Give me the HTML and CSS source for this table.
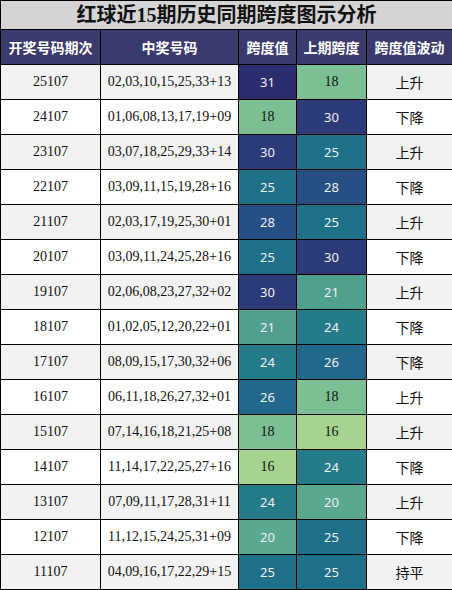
FILE: index.html
```html
<!DOCTYPE html>
<html lang="zh">
<head>
<meta charset="utf-8">
<title>红球近15期历史同期跨度图示分析</title>
<link rel="stylesheet" href="styles.css">
</head>
<body>
<table class="sheet">
  <colgroup>
    <col class="c-issue"><col class="c-nums"><col class="c-span"><col class="c-prev"><col class="c-trend">
  </colgroup>
  <thead>
    <tr class="title-row"><th colspan="5" class="title">红球近15期历史同期跨度图示分析</th></tr>
    <tr class="head-row">
      <th>开奖号码期次</th><th>中奖号码</th><th>跨度值</th><th>上期跨度</th><th>跨度值波动</th>
    </tr>
  </thead>
  <tbody>
    <tr class="odd"><td class="issue">25107</td><td class="nums">02,03,10,15,25,33+13</td><td class="v v31">31</td><td class="v v18">18</td><td class="trend">上升</td></tr>
    <tr class="even"><td class="issue">24107</td><td class="nums">01,06,08,13,17,19+09</td><td class="v v18">18</td><td class="v v30">30</td><td class="trend">下降</td></tr>
    <tr class="odd"><td class="issue">23107</td><td class="nums">03,07,18,25,29,33+14</td><td class="v v30">30</td><td class="v v25">25</td><td class="trend">上升</td></tr>
    <tr class="even"><td class="issue">22107</td><td class="nums">03,09,11,15,19,28+16</td><td class="v v25">25</td><td class="v v28">28</td><td class="trend">下降</td></tr>
    <tr class="odd"><td class="issue">21107</td><td class="nums">02,03,17,19,25,30+01</td><td class="v v28">28</td><td class="v v25">25</td><td class="trend">上升</td></tr>
    <tr class="even"><td class="issue">20107</td><td class="nums">03,09,11,24,25,28+16</td><td class="v v25">25</td><td class="v v30">30</td><td class="trend">下降</td></tr>
    <tr class="odd"><td class="issue">19107</td><td class="nums">02,06,08,23,27,32+02</td><td class="v v30">30</td><td class="v v21">21</td><td class="trend">上升</td></tr>
    <tr class="even"><td class="issue">18107</td><td class="nums">01,02,05,12,20,22+01</td><td class="v v21">21</td><td class="v v24">24</td><td class="trend">下降</td></tr>
    <tr class="odd"><td class="issue">17107</td><td class="nums">08,09,15,17,30,32+06</td><td class="v v24">24</td><td class="v v26">26</td><td class="trend">下降</td></tr>
    <tr class="even"><td class="issue">16107</td><td class="nums">06,11,18,26,27,32+01</td><td class="v v26">26</td><td class="v v18">18</td><td class="trend">上升</td></tr>
    <tr class="odd"><td class="issue">15107</td><td class="nums">07,14,16,18,21,25+08</td><td class="v v18">18</td><td class="v v16">16</td><td class="trend">上升</td></tr>
    <tr class="even"><td class="issue">14107</td><td class="nums">11,14,17,22,25,27+16</td><td class="v v16">16</td><td class="v v24">24</td><td class="trend">下降</td></tr>
    <tr class="odd"><td class="issue">13107</td><td class="nums">07,09,11,17,28,31+11</td><td class="v v24">24</td><td class="v v20">20</td><td class="trend">上升</td></tr>
    <tr class="even"><td class="issue">12107</td><td class="nums">11,12,15,24,25,31+09</td><td class="v v20">20</td><td class="v v25">25</td><td class="trend">下降</td></tr>
    <tr class="odd"><td class="issue">11107</td><td class="nums">04,09,16,17,22,29+15</td><td class="v v25">25</td><td class="v v25">25</td><td class="trend">持平</td></tr>
  </tbody>
</table>
</body>
</html>
```

FILE: styles.css
```css
html, body {
  margin: 0;
  padding: 0;
  background: #ffffff;
}

.sheet {
  width: 452px;
  border-collapse: collapse;
  table-layout: fixed;
  font-family: "Liberation Serif", "Noto Sans CJK SC", serif;
}

.c-issue { width: 100px; }
.c-nums { width: 138px; }
.c-span { width: 58px; }
.c-prev { width: 70px; }
.c-trend { width: 86px; }

.sheet th,
.sheet td {
  border: 1px solid #000;
  padding: 0;
  text-align: center;
  vertical-align: middle;
  overflow: hidden;
  white-space: nowrap;
}

.title-row th {
  height: 28px;
  background: #d4d4d4;
  color: #111;
  font-family: "Liberation Serif", "Noto Sans CJK SC", serif;
  font-size: 20px;
  font-weight: bold;
  line-height: 28px;
}

.head-row th {
  height: 34px;
  background: #3b3a6d;
  color: #ffffff;
  font-family: "Noto Sans CJK SC", sans-serif;
  font-size: 14px;
  font-weight: bold;
}

.sheet td {
  height: 34px;
  font-size: 14px;
  color: #111;
}

.odd td { background: #f2f2f2; }
.even td { background: #ffffff; }

.trend {
  font-family: "Noto Sans CJK SC", sans-serif;
  font-size: 14px;
}

.sheet td.v {
  font-family: "Noto Sans", "Liberation Sans", sans-serif;
  font-size: 13px;
  color: #eef0f4;
}

.sheet td.v31 { background: #2b2e6e; }
.sheet td.v30 { background: #2d3a78; }
.sheet td.v28 { background: #264f83; }
.sheet td.v26 { background: #21688a; }
.sheet td.v25 { background: #1f718a; }
.sheet td.v24 { background: #257b8a; }
.sheet td.v21 { background: #4fa08f; }
.sheet td.v20 { background: #5aa88f; }
.sheet td.v18 { background: #7dbf95; color: #111; font-family: "Liberation Serif", serif; font-size: 14px; }
.sheet td.v16 { background: #a5d390; color: #111; font-family: "Liberation Serif", serif; font-size: 14px; }
```
